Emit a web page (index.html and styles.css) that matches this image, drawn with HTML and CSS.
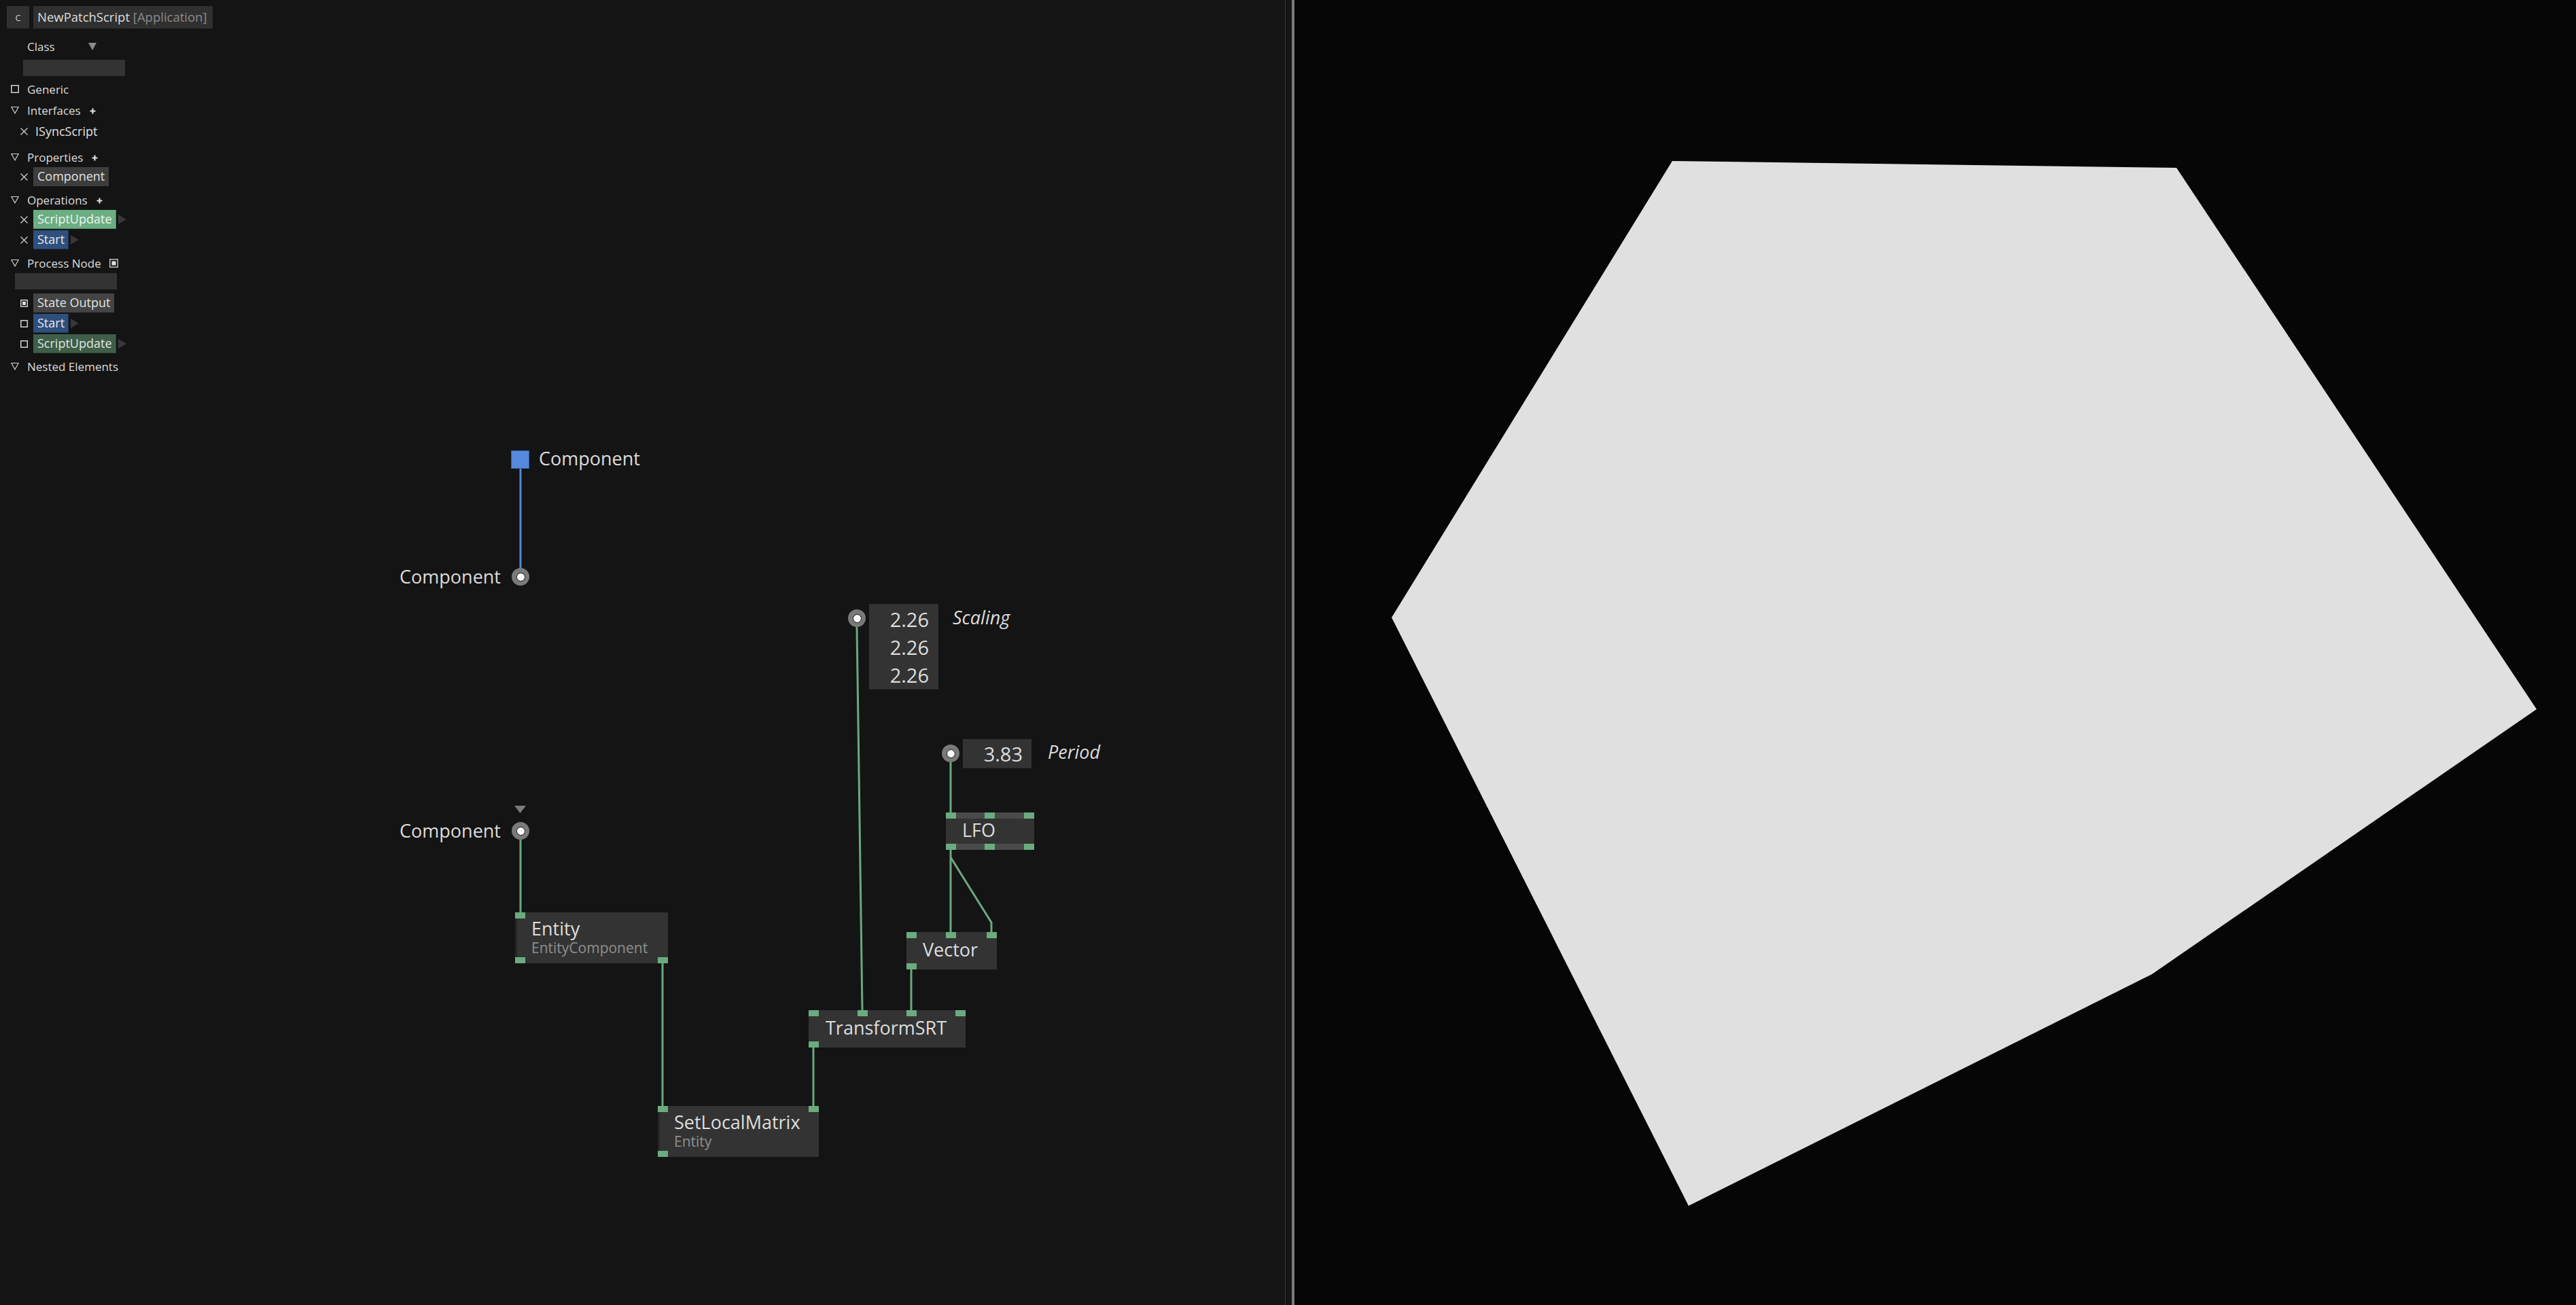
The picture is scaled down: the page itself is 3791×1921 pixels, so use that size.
FILE: index.html
```html
<!DOCTYPE html>
<html>
<head>
<meta charset="utf-8">
<title>NewPatchScript</title>
<link rel="stylesheet" href="styles.css">
</head>
<body>
<div class="app">
  <div class="editor">
    <aside class="sidebar">
      <div class="header">
        <div class="cbtn">C</div>
        <div class="title">NewPatchScript <span class="muted">[Application]</span></div>
      </div>
      <div class="class-row"><span class="class-lbl">Class</span><span class="dd"><svg width="12" height="11" viewBox="0 0 12 11"><polygon points="0,0 12,0 6,11" fill="#8a8a8a"/></svg></span></div>
      <div class="input class-input"></div>

      <div class="row r-generic"><svg class="ico" viewBox="0 0 12 12"><rect x="0.75" y="0.75" width="10.5" height="10.5" fill="none" stroke="#cfcfcf" stroke-width="1.5"/></svg><span>Generic</span></div>

      <div class="row r-sec"><svg class="ico" viewBox="0 0 12 12"><polygon points="0.8,1.5 11.2,1.5 6,10.8" fill="none" stroke="#cfcfcf" stroke-width="1.2"/></svg><span>Interfaces</span><svg class="plus" viewBox="0 0 9 9"><path d="M4.5 0.5v8M0.5 4.5h8" stroke="#e0e0e0" stroke-width="2.2"/></svg></div>
      <div class="item i-plain"><svg class="x" viewBox="0 0 13 13"><path d="M1.5 1.5l10 10M11.5 1.5l-10 10" stroke="#cfcfcf" stroke-width="1.3"/></svg><span class="pill plain">ISyncScript</span></div>

      <div class="row r-sec2"><svg class="ico" viewBox="0 0 12 12"><polygon points="0.8,1.5 11.2,1.5 6,10.8" fill="none" stroke="#cfcfcf" stroke-width="1.2"/></svg><span>Properties</span><svg class="plus" viewBox="0 0 9 9"><path d="M4.5 0.5v8M0.5 4.5h8" stroke="#e0e0e0" stroke-width="2.2"/></svg></div>
      <div class="item i-first"><svg class="x" viewBox="0 0 13 13"><path d="M1.5 1.5l10 10M11.5 1.5l-10 10" stroke="#cfcfcf" stroke-width="1.3"/></svg><span class="pill gray">Component</span></div>

      <div class="row r-ops"><svg class="ico" viewBox="0 0 12 12"><polygon points="0.8,1.5 11.2,1.5 6,10.8" fill="none" stroke="#cfcfcf" stroke-width="1.2"/></svg><span>Operations</span><svg class="plus" viewBox="0 0 9 9"><path d="M4.5 0.5v8M0.5 4.5h8" stroke="#e0e0e0" stroke-width="2.2"/></svg></div>
      <div class="item i-first"><svg class="x" viewBox="0 0 13 13"><path d="M1.5 1.5l10 10M11.5 1.5l-10 10" stroke="#cfcfcf" stroke-width="1.3"/></svg><span class="pill green">ScriptUpdate</span><svg class="play" viewBox="0 0 12 14"><polygon points="0,0 12,7 0,14" fill="#383838"/></svg></div>
      <div class="item i-next"><svg class="x" viewBox="0 0 13 13"><path d="M1.5 1.5l10 10M11.5 1.5l-10 10" stroke="#cfcfcf" stroke-width="1.3"/></svg><span class="pill blue">Start</span><svg class="play" viewBox="0 0 12 14"><polygon points="0,0 12,7 0,14" fill="#383838"/></svg></div>

      <div class="row r-ops"><svg class="ico" viewBox="0 0 12 12"><polygon points="0.8,1.5 11.2,1.5 6,10.8" fill="none" stroke="#cfcfcf" stroke-width="1.2"/></svg><span>Process Node</span><svg class="pnode" viewBox="0 0 13 13"><rect x="0.75" y="0.75" width="11.5" height="11.5" fill="none" stroke="#bdbdbd" stroke-width="1.5"/><rect x="3.5" y="3.5" width="6" height="6" fill="#e0e0e0"/></svg></div>
      <div class="input proc-input"></div>
      <div class="item sub i-state"><svg class="cb" viewBox="0 0 11 11"><rect x="0.75" y="0.75" width="9.5" height="9.5" fill="none" stroke="#cfcfcf" stroke-width="1.5"/><rect x="3" y="3" width="5" height="5" fill="#dcdcdc"/></svg><span class="pill state">State Output</span></div>
      <div class="item sub i-next"><svg class="cb" viewBox="0 0 11 11"><rect x="0.75" y="0.75" width="9.5" height="9.5" fill="none" stroke="#cfcfcf" stroke-width="1.5"/></svg><span class="pill blue">Start</span><svg class="play" viewBox="0 0 12 14"><polygon points="0,0 12,7 0,14" fill="#383838"/></svg></div>
      <div class="item sub i-next"><svg class="cb" viewBox="0 0 11 11"><rect x="0.75" y="0.75" width="9.5" height="9.5" fill="none" stroke="#cfcfcf" stroke-width="1.5"/></svg><span class="pill dkgreen">ScriptUpdate</span><svg class="play" viewBox="0 0 12 14"><polygon points="0,0 12,7 0,14" fill="#383838"/></svg></div>

      <div class="row r-nested"><svg class="ico" viewBox="0 0 12 12"><polygon points="0.8,1.5 11.2,1.5 6,10.8" fill="none" stroke="#cfcfcf" stroke-width="1.2"/></svg><span>Nested Elements</span></div>
    </aside>

    <div class="graph">
      <svg class="wires" width="1891" height="1921" viewBox="0 0 1891 1921">
        <g stroke="#6aa87f" stroke-width="3" fill="none">
          <line x1="766" y1="1236" x2="766" y2="1418"/>
          <line x1="975" y1="1418" x2="975" y2="1703"/>
          <line x1="1197" y1="1542" x2="1197" y2="1628"/>
          <line x1="1261" y1="923" x2="1269" y2="1487"/>
          <line x1="1399" y1="1122" x2="1399" y2="1196"/>
          <line x1="1399" y1="1251" x2="1399" y2="1372"/>
          <polyline points="1399,1262 1459,1358 1459,1372"/>
          <line x1="1341" y1="1427" x2="1341" y2="1487"/>
        </g>
        <line x1="766" y1="690" x2="766" y2="838" stroke="#5588dd" stroke-width="3"/>
      </svg>

      <div class="outpin">
        <span class="sq"></span><span class="glabel">Component</span>
      </div>

      <div class="inpin pin1">
        <span class="glabel">Component</span><span class="circ"><span class="dot"></span></span>
      </div>

      <div class="inpin pin2">
        <span class="glabel">Component</span><span class="circ"><span class="dot"></span></span>
      </div>
      <svg class="caret" viewBox="0 0 17 11"><polygon points="0,0 17,0 8.5,11" fill="#7a7a7a"/></svg>

      <div class="valpin scaling">
        <span class="circ"><span class="dot"></span></span>
        <div class="vbox tall"><div>2.26</div><div>2.26</div><div>2.26</div></div>
        <span class="vlabel">Scaling</span>
      </div>

      <div class="valpin period">
        <span class="circ"><span class="dot"></span></span>
        <div class="vbox short"><div>3.83</div></div>
        <span class="vlabel">Period</span>
      </div>

      <div class="node n-entity strip">
        <span class="port" style="left:0;top:0"></span>
        <span class="port" style="left:0;bottom:0"></span>
        <span class="port" style="right:0;bottom:0"></span>
        <div class="ntitle">Entity</div>
        <div class="nsub">EntityComponent</div>
      </div>

      <div class="node n-setlocal strip">
        <span class="port" style="left:0;top:0"></span>
        <span class="port" style="right:0;top:0"></span>
        <span class="port" style="left:0;bottom:0"></span>
        <div class="ntitle">SetLocalMatrix</div>
        <div class="nsub">Entity</div>
      </div>

      <div class="node small n-transform">
        <span class="port" style="left:0;top:0"></span>
        <span class="port" style="left:72px;top:0"></span>
        <span class="port" style="left:144px;top:0"></span>
        <span class="port" style="left:216px;top:0"></span>
        <span class="port" style="left:0;bottom:0"></span>
        <div class="ntitle">TransformSRT</div>
      </div>

      <div class="node small n-lfo bars">
        <span class="port" style="left:0;top:0"></span>
        <span class="port" style="left:57px;top:0"></span>
        <span class="port" style="right:0;top:0"></span>
        <span class="port" style="left:0;bottom:0"></span>
        <span class="port" style="left:57px;bottom:0"></span>
        <span class="port" style="right:0;bottom:0"></span>
        <div class="ntitle">LFO</div>
      </div>

      <div class="node small n-vector">
        <span class="port" style="left:0;top:0"></span>
        <span class="port" style="left:58px;top:0"></span>
        <span class="port" style="right:0;top:0"></span>
        <span class="port" style="left:0;bottom:0"></span>
        <div class="ntitle">Vector</div>
      </div>
    </div>
  </div>
  <div class="sep"></div>
  <div class="viewport">
    <svg class="scene" width="1886" height="1921" viewBox="0 0 1886 1921">
      <polygon points="556,237 1298,247 1828,1044 1262,1434 580,1775 143,909" fill="#e0e0e0"/>
    </svg>
  </div>
</div>
</body>
</html>
```

FILE: styles.css
```css
html, body {
  margin: 0;
  padding: 0;
  background: #141414;
  overflow: hidden;
}
body {
  font-family: "Open Sans", "Noto Sans", "DejaVu Sans", sans-serif;
  color: #dcdcdc;
}
.app {
  display: flex;
  width: 3791px;
  height: 1921px;
}
.editor {
  position: relative;
  width: 1891px;
  height: 1921px;
  flex: none;
  background: #141414;
}
.sep {
  width: 14px;
  flex: none;
  box-sizing: border-box;
  border-left: 1px solid #383838;
  border-right: 4px solid #7a7a7a;
  background: #141414;
}
.viewport {
  flex: 1;
  background: #060606;
  position: relative;
}
.scene { display: block; }

/* ---------- sidebar ---------- */
.sidebar {
  position: relative;
  z-index: 2;
  padding: 9px 0 0 10px;
  width: 320px;
  font-size: 17px;
}
.header {
  display: flex;
  gap: 6px;
  height: 33px;
}
.cbtn {
  width: 33px;
  height: 33px;
  background: #303030;
  color: #cfcfcf;
  font-size: 13px;
  display: flex;
  align-items: center;
  justify-content: center;
}
.title {
  width: 258px;
  height: 33px;
  background: #303030;
  padding-left: 6px;
  font-size: 18.5px;
  line-height: 32px;
  color: #dedede;
  white-space: nowrap;
}
.muted { color: #8a8a8a; }

.class-row {
  display: flex;
  align-items: center;
  height: 24px;
  margin-top: 14px;
  padding-left: 30px;
}
.class-lbl { width: 90px; }
.dd { display: flex; align-items: center; }
.input {
  height: 24px;
  width: 150px;
  background: #333333;
}
.class-input { margin: 8px 0 0 24px; }
.proc-input { margin: 3px 0 0 12px; }

.row {
  display: flex;
  align-items: center;
  height: 24px;
  padding-left: 6px;
  white-space: nowrap;
}
.row .ico {
  width: 12px;
  height: 12px;
  margin-right: 12px;
  flex: none;
}
.r-generic { margin-top: 7px; }
.r-sec { margin-top: 7px; }
.r-sec2 { margin-top: 14px; }
.r-ops { margin-top: 8px; }
.r-nested { margin-top: 7px; }
.plus {
  width: 9px;
  height: 9px;
  margin-left: 13px;
  margin-top: 3px;
}
.pnode {
  width: 13px;
  height: 13px;
  margin-left: 12px;
}

.item {
  display: flex;
  align-items: center;
  height: 28px;
  padding-left: 19px;
}
.item .x {
  width: 13px;
  height: 13px;
  margin-right: 7px;
  flex: none;
}
.item.sub { padding-left: 20px; }
.item .cb {
  width: 11px;
  height: 11px;
  margin-right: 8px;
  flex: none;
}
.i-plain { margin-top: 7px; height: 24px; }
.i-first { margin-top: 3px; }
.i-next { margin-top: 2px; }
.i-state { margin-top: 6px; }

.pill {
  height: 28px;
  line-height: 27px;
  padding: 0 6px;
  font-size: 18px;
  color: #e2e2e2;
  box-sizing: border-box;
  white-space: nowrap;
}
.pill.plain { padding: 0 3px; height: 24px; line-height: 24px; }
.pill.gray { background: #3d3d3d; }
.pill.green { background: #6aae82; color: #eef4ef; box-shadow: inset -1px -1px 0 #4f8a63; }
.pill.blue { background: #2f4f7c; color: #e6e9f0; box-shadow: inset -1px -1px 0 #22395c; }
.pill.dkgreen { background: #3e5e48; color: #e0e6e1; box-shadow: inset -1px -1px 0 #2f4a37; }
.pill.state { background: #444444; }
.play {
  width: 12px;
  height: 14px;
  margin-left: 3px;
}

/* ---------- graph canvas ---------- */
.graph {
  position: absolute;
  inset: 0;
  z-index: 1;
}
.wires {
  position: absolute;
  left: 0;
  top: 0;
}
.glabel {
  font-size: 27px;
  line-height: 26px;
  color: #dcdcdc;
  white-space: nowrap;
}
.outpin {
  position: absolute;
  left: 752px;
  top: 663px;
  display: flex;
  align-items: center;
  gap: 14px;
}
.outpin .glabel { margin-top: -3px; }
.sq {
  width: 27px;
  height: 27px;
  box-sizing: border-box;
  background: #5689e0;
  border: 1.5px solid #3b5d9c;
}
.inpin {
  position: absolute;
  display: flex;
  align-items: center;
  justify-content: flex-end;
  gap: 16px;
  right: calc(1891px - 779px);
}
.pin1 { top: 836px; }
.pin2 { top: 1210px; }
.circ {
  width: 26px;
  height: 26px;
  border-radius: 50%;
  background: #7a7a7a;
  display: flex;
  align-items: center;
  justify-content: center;
  flex: none;
}
.dot {
  width: 13px;
  height: 13px;
  box-sizing: border-box;
  border-radius: 50%;
  background: #ffffff;
  border: 1.5px solid #111;
}
.caret {
  position: absolute;
  left: 757px;
  top: 1186px;
  width: 17px;
  height: 11px;
}

.valpin {
  position: absolute;
  display: flex;
  align-items: flex-start;
}
.valpin .circ { margin-top: 8px; }
.scaling { left: 1248px; top: 889px; }
.period { left: 1386px; top: 1088px; }
.vbox {
  background: #333333;
  font-size: 29px;
  text-align: right;
  color: #dedede;
  box-shadow: inset 0 -1px 0 #2a2a2a;
}
.vbox.tall {
  width: 102px;
  height: 126px;
  margin-left: 5px;
  padding: 2px 14px 0 0;
  box-sizing: border-box;
  line-height: 41px;
}
.vbox.short {
  width: 101px;
  height: 43px;
  margin-left: 5px;
  padding-right: 13px;
  box-sizing: border-box;
  line-height: 43px;
}
.vlabel {
  font-style: italic;
  font-size: 27px;
  line-height: 40px;
  color: #dcdcdc;
  margin-left: 21px;
}
.period .vlabel { margin-left: 24px; line-height: 38px; }

.node {
  position: absolute;
  box-sizing: border-box;
  background: #333333;
  padding-left: 24px;
  color: #dedede;
  white-space: nowrap;
}
.node.strip { box-shadow: inset 3px 0 0 #262626; padding-top: 10px; }
.node.small {
  height: 55px;
  display: flex;
  align-items: center;
  padding-bottom: 3px;
}
.ntitle {
  font-size: 27px;
  line-height: 28px;
}
.nsub {
  font-size: 21px;
  line-height: 24px;
  margin-top: 2px;
  color: #8f8f8f;
}
.port {
  position: absolute;
  width: 15px;
  height: 9px;
  background: #6aab80;
  z-index: 1;
}
.n-entity { left: 758px; top: 1343px; width: 225px; height: 75px; }
.n-setlocal { left: 968px; top: 1628px; width: 237px; height: 75px; }
.n-transform { left: 1190px; top: 1487px; width: 231px; padding-left: 25px; }
.n-lfo { left: 1392px; top: 1196px; width: 130px; }
.n-lfo.bars { box-shadow: inset 0 9px 0 #4a4a4a, inset 0 -9px 0 #4a4a4a; }
.n-vector { left: 1334px; top: 1372px; width: 133px; }
```
